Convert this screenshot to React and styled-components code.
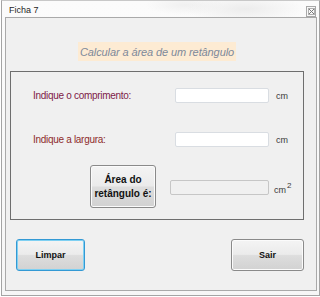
import styled, { createGlobalStyle } from "styled-components";

const GlobalStyle = createGlobalStyle`
  html, body {
    margin: 0;
    padding: 0;
    background: #ffffff;
  }
  body {
    width: 320px;
    height: 297px;
    overflow: hidden;
    font-family: "Liberation Sans", Arial, sans-serif;
  }
`;

export default function App() {
  return (
    <>
      <GlobalStyle />
      <Window>
        <TitleBar>
          <Title>Ficha 7</Title>
          <CloseBox>
            <svg width="7" height="7" viewBox="0 0 7 7">
              <path d="M0.5 0.5 L6.5 6.5 M6.5 0.5 L0.5 6.5" stroke="#7a7a7a" strokeWidth="1" />
              <rect x="0.5" y="0.5" width="6" height="6" fill="none" stroke="#b0b0b0" strokeWidth="1" />
            </svg>
          </CloseBox>
        </TitleBar>

        <Client>
          <Content>
            <Heading>Calcular a área de um retângulo</Heading>

            <GroupBox>
              <InputRow $top={16}>
                <Label $color="#7e2048">Indique o comprimento:</Label>
                <TextField />
                <Unit>cm</Unit>
              </InputRow>

              <InputRow $top={29}>
                <Label $color="#8e2c2c">Indique a largura:</Label>
                <TextField />
                <Unit>cm</Unit>
              </InputRow>

              <ResultRow>
                <AreaButton>
                  Área do
                  <br />
                  retângulo é:
                </AreaButton>
                <ResultField />
                <Unit $raise>
                  cm<sup>2</sup>
                </Unit>
              </ResultRow>
            </GroupBox>

            <Actions>
              <ActionButton $width={69} $focused>
                Limpar
              </ActionButton>
              <ActionButton $width={73}>Sair</ActionButton>
            </Actions>
          </Content>
        </Client>
      </Window>
    </>
  );
}

const Window = styled.div`
  box-sizing: border-box;
  margin-left: 1px;
  width: 319px;
  height: 296px;
  border: 1px solid #a4a4a4;
  border-top-color: #c8c8c8;
  background: linear-gradient(180deg, #fbfbfb 0%, #f6f6f6 100%);
  display: flex;
  flex-direction: column;
  padding: 0 2px 4px 3px;
`;

const TitleBar = styled.div`
  height: 16px;
  display: flex;
  align-items: center;
  justify-content: space-between;
  background: radial-gradient(ellipse 60px 14px at 240px 8px, #ececec 0%, rgba(255, 255, 255, 0) 100%),
    radial-gradient(ellipse 40px 10px at 180px 4px, #f0f0f0 0%, rgba(255, 255, 255, 0) 100%);
`;

const Title = styled.span`
  padding-left: 4px;
  padding-top: 1px;
  font-family: "Liberation Sans", Arial, sans-serif;
  font-size: 9px;
  color: #1e1e1e;
`;

const CloseBox = styled.div`
  box-sizing: border-box;
  width: 10px;
  height: 11px;
  margin-right: 1px;
  margin-top: 4px;
  border: 1px solid #a8a8a8;
  background: #f8f8f8;
  display: flex;
  align-items: center;
  justify-content: center;
`;

const Client = styled.div`
  box-sizing: border-box;
  flex: 1;
  border: 1px solid #a9a9a9;
  background: #f0f0f0;
`;

const Content = styled.div`
  width: 294px;
  margin-left: 4px;
  display: flex;
  flex-direction: column;
`;

const Heading = styled.div`
  align-self: center;
  margin-top: 24px;
  height: 19px;
  padding: 0 2px;
  display: flex;
  align-items: center;
  background: #fdebd3;
  font-family: "Liberation Sans", Arial, sans-serif;
  font-style: italic;
  font-size: 11px;
  letter-spacing: -0.1px;
  color: #7d899a;
`;

const GroupBox = styled.div`
  box-sizing: border-box;
  margin-top: 10px;
  height: 149px;
  border: 1px solid #6e6e6e;
  display: flex;
  flex-direction: column;
`;

const InputRow = styled.div`
  display: flex;
  align-items: center;
  height: 15px;
  margin-top: ${(p) => p.$top}px;
  padding-left: 22px;
`;

const Label = styled.span`
  width: 142px;
  font-family: "Liberation Sans", Arial, sans-serif;
  font-size: 10px;
  letter-spacing: -0.3px;
  color: ${(p) => p.$color};
`;

const TextField = styled.div`
  box-sizing: border-box;
  width: 94px;
  height: 15px;
  background: #ffffff;
  border: 1px solid #d9dde2;
  border-radius: 2px;
`;

const ResultField = styled(TextField)`
  width: 99px;
  background: #f0f0f0;
  border-color: #c6c6c6;
  margin-top: 2px;
`;

const Unit = styled.span`
  margin-left: 7px;
  margin-top: ${(p) => (p.$raise ? "2px" : "0")};
  font-family: "Liberation Sans", Arial, sans-serif;
  font-size: 9px;
  color: #3a3a3a;

  sup {
    font-size: 8px;
    margin-left: 1px;
    vertical-align: 5px;
  }
`;

const ResultRow = styled.div`
  display: flex;
  align-items: center;
  margin-top: 18px;
  padding-left: 79px;
  gap: 14px;

  ${Unit} {
    margin-left: -9px;
  }
`;

const AreaButton = styled.div`
  box-sizing: border-box;
  width: 66px;
  height: 43px;
  border: 1px solid #8a8a8a;
  border-radius: 3px;
  background: linear-gradient(180deg, #f4f4f4 0%, #ebebeb 48%, #dddddd 52%, #d2d2d2 100%);
  box-shadow: inset 0 0 0 1px #fbfbfb;
  display: flex;
  align-items: center;
  justify-content: center;
  text-align: center;
  font-family: "Liberation Sans", Arial, sans-serif;
  font-weight: bold;
  font-size: 10px;
  line-height: 14px;
  color: #111111;
`;

const Actions = styled.div`
  display: flex;
  justify-content: space-between;
  align-items: center;
  margin-top: 19px;
  padding-left: 6px;
`;

const ActionButton = styled.div`
  box-sizing: border-box;
  width: ${(p) => p.$width}px;
  height: 32px;
  border: 1px solid ${(p) => (p.$focused ? "#3399d4" : "#8a8a8a")};
  border-radius: 3px;
  background: linear-gradient(180deg, #f4f4f4 0%, #ebebeb 48%, #dddddd 52%, #d2d2d2 100%);
  box-shadow: inset 0 0 0 1px ${(p) => (p.$focused ? "#7fd0f2" : "#fbfbfb")};
  display: flex;
  align-items: center;
  justify-content: center;
  font-family: "Liberation Sans", Arial, sans-serif;
  font-weight: bold;
  font-size: 9px;
  color: #111111;
`;
